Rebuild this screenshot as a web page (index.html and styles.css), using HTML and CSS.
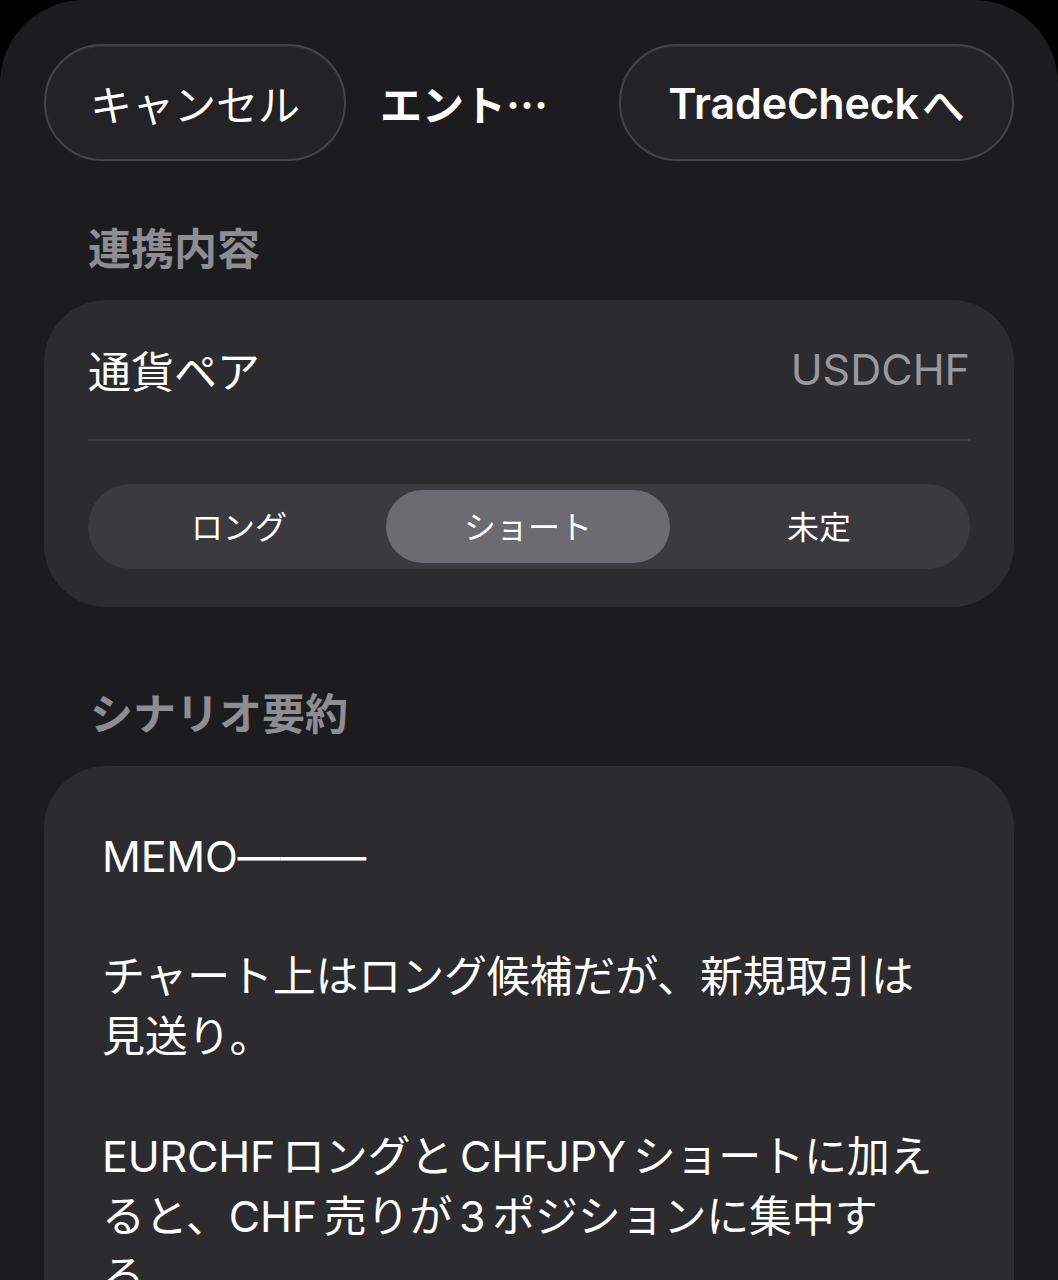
FILE: index.html
```html
<!DOCTYPE html>
<html lang="ja">
<head>
<meta charset="utf-8">
<title>エントリー</title>
<link rel="stylesheet" href="styles.css">
</head>
<body>
<div class="sheet">
  <header class="nav">
    <button class="pill pill-cancel">キャンセル</button>
    <div class="nav-title">エント…</div>
    <button class="pill pill-trade">TradeCheck<span class="kana">へ</span></button>
  </header>

  <h2 class="section-title first">連携内容</h2>
  <section class="card card-pair">
    <div class="row">
      <span class="row-label">通貨ペア</span>
      <span class="row-value">USDCHF</span>
    </div>
    <div class="divider"></div>
    <div class="segment">
      <div class="seg-item">ロング</div>
      <div class="seg-item selected">ショート</div>
      <div class="seg-item">未定</div>
    </div>
  </section>

  <h2 class="section-title second">シナリオ要約</h2>
  <section class="card card-memo">
    <p class="memo">MEMO———<br><br>チャート上はロング候補だが、新規取引は<br>見送り。<br><br>EURCHF ロングと CHFJPY ショートに加え<br>ると、CHF 売りが 3 ポジションに集中す<br>る。</p>
  </section>
</div>
</body>
</html>
```

FILE: styles.css
```css
* { box-sizing: border-box; }

html, body {
  margin: 0;
  padding: 0;
  background: #000;
}

body {
  font-family: Inter, "Noto Sans CJK JP", sans-serif;
  color: #fff;
  height: 1280px;
  overflow: hidden;
}

.sheet {
  background: #1c1c1e;
  border-radius: 84px 84px 0 0;
  min-height: 1280px;
  padding: 44px 44px 0;
}

.nav {
  display: flex;
  align-items: center;
  height: 117px;
}

.pill {
  height: 117px;
  border-radius: 58px;
  background: #232325;
  border: 2px solid #444447;
  color: #fff;
  font-family: Inter, "Noto Sans CJK JP", sans-serif;
  font-size: 42px;
  padding: 0;
  display: flex;
  align-items: center;
  justify-content: center;
  box-shadow: inset 0 1px 0 rgba(255,255,255,0.06);
}

.pill-cancel {
  width: 302px;
  font-weight: 400;
  font-family: "Noto Sans CJK JP", sans-serif;
}

.pill-trade {
  width: 395px;
  font-size: 43px;
  font-weight: 600;
  letter-spacing: -0.2px;
}

.pill-trade .kana {
  margin-left: 3px;
  font-weight: 500;
}

.nav-title {
  flex: 1;
  margin-left: 34px;
  font-family: "Noto Sans CJK JP", sans-serif;
  font-size: 42px;
  font-weight: 700;
  white-space: nowrap;
}

.section-title {
  margin: 0;
  padding-left: 44px;
  font-family: "Noto Sans CJK JP", sans-serif;
  font-size: 43px;
  line-height: 50px;
  font-weight: 700;
  color: #8d8d92;
}

.section-title.first { margin-top: 60px; margin-bottom: 29px; }
.section-title.second { margin-top: 79px; margin-bottom: 30px; padding-left: 46px; }

.card {
  background: #2c2c2e;
  border-radius: 62px;
}

.card-pair {
  padding: 0 44px 38px;
}

.row {
  height: 139px;
  display: flex;
  align-items: center;
  justify-content: space-between;
  padding-bottom: 2px;
}

.row-label {
  font-size: 43px;
  color: #fff;
}

.row-value {
  font-size: 43px;
  color: #98989d;
}

.divider {
  height: 2px;
  background: #3d3d41;
}

.segment {
  margin-top: 43px;
  height: 85px;
  border-radius: 43px;
  background: #3a3a3f;
  padding: 6px;
  display: grid;
  grid-template-columns: 1fr 1fr 1fr;
}

.seg-item {
  display: flex;
  align-items: center;
  justify-content: center;
  font-size: 32px;
  color: #fff;
  border-radius: 37px;
  padding-bottom: 3px;
}

.seg-item.selected {
  background: #6c6b71;
  margin: 0 4px 0 2px;
}

.card-memo {
  padding: 60px 58px 80px;
  min-height: 600px;
}

.memo {
  margin: 0;
  font-size: 43px;
  line-height: 60px;
  color: #fff;
  word-spacing: -5px;
  letter-spacing: -0.2px;
}
```
